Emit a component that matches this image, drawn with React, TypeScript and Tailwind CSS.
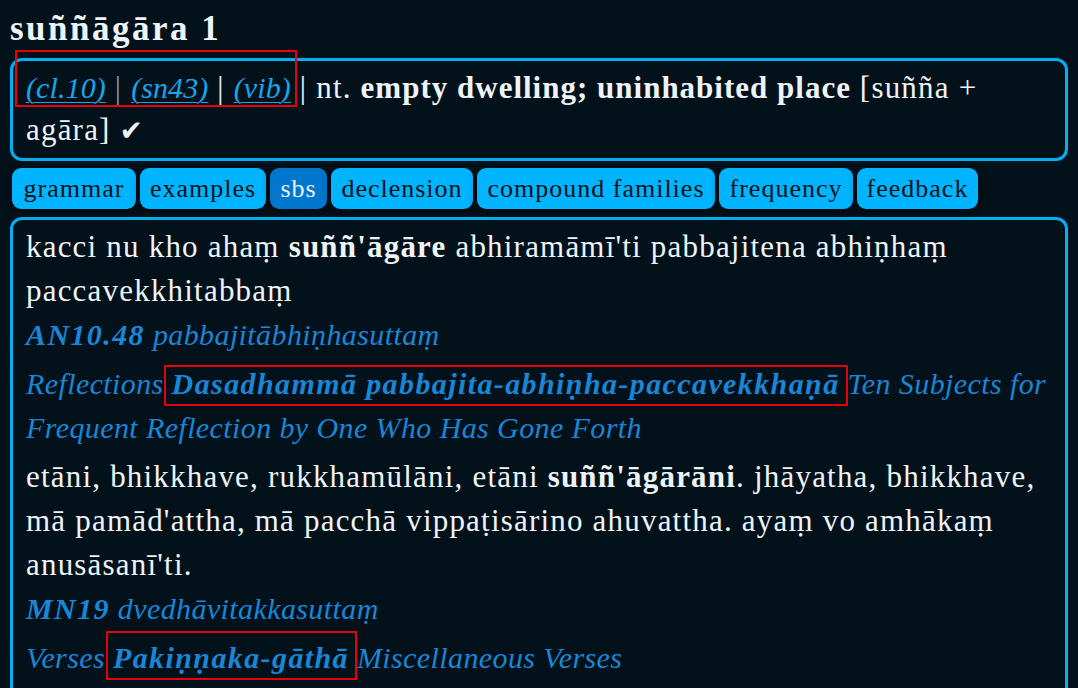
import type { ReactNode } from 'react';

const TABS = [
  { label: 'grammar', active: false, w: 'w-[124px]' },
  { label: 'examples', active: false, w: 'w-[126px]' },
  { label: 'sbs', active: true, w: 'w-[57px]' },
  { label: 'declension', active: false, w: 'w-[142px]' },
  { label: 'compound families', active: false, w: 'w-[238px]' },
  { label: 'frequency', active: false, w: 'w-[134px]' },
  { label: 'feedback', active: false, w: 'w-[121px]' },
] as const;

function RefLink({ children }: { children: ReactNode }) {
  return (
    <span className="text-[30px] italic tracking-[0.1px] text-[#19a6ec] underline decoration-1 underline-offset-[4px]">
      {children}
    </span>
  );
}

function Src({ children }: { children: ReactNode }) {
  return <b className="tracking-[1.4px]">{children}</b>;
}

function Marked({ children, box }: { children: ReactNode; box: string }) {
  return (
    <span className="relative inline-block">
      {children}
      <span className={`pointer-events-none absolute border-2 border-[#e8000b] ${box}`} />
    </span>
  );
}

export default function App() {
  return (
    <div className="min-h-screen bg-[#02111a] px-[10px] pt-[9px] font-['Liberation_Serif',serif] tracking-[1.2px] text-[#eef3f7]">
      <h1 className="text-[35px] font-bold leading-[40px] tracking-[2.5px]">suññāgāra 1</h1>

      <div className="mt-[9px] rounded-[12px] border-[3px] border-[#00b0f0] px-[13px] py-[6px] text-[31px] leading-[42px]">
        <div className="whitespace-nowrap">
          <Marked box="left-[-11px] right-[-6px] top-[-17px] bottom-[2px]">
            <RefLink>(cl.10)</RefLink> <span className="text-[#8a949b]">|</span>{' '}
            <RefLink>(sn43)</RefLink> | <RefLink>(vib)</RefLink>
          </Marked>{' '}
          | nt. <b className="tracking-[1px]">empty dwelling; uninhabited place</b> [suñña +
        </div>
        <div className="whitespace-nowrap">
          agāra] <span className="font-['DejaVu_Sans',sans-serif] text-[28px]">✔</span>
        </div>
      </div>

      <div className="mt-[7px] flex gap-[4px] pl-[2px]">
        {TABS.map((t) => (
          <div
            key={t.label}
            className={`h-[41px] ${t.w} rounded-[9px] text-center text-[26px] leading-[41px] tracking-[1px] shadow-[0_2px_8px_rgba(0,0,0,0.5)] ${
              t.active ? 'bg-[#0077cc] text-[#e6f2fa]' : 'bg-[#00b4ff] text-[#02111a]'
            }`}
          >
            {t.label}
          </div>
        ))}
      </div>

      <div className="mt-[8px] rounded-t-[12px] border-[3px] border-b-0 border-[#00b0f0] px-[13px] pt-[5px] pb-[20px] text-[31px] leading-[44px]">
        <div className="whitespace-nowrap">
          kacci nu kho ahaṃ <b>suññ'āgāre</b> abhiramāmī'ti pabbajitena abhiṇhaṃ
          <br />
          paccavekkhitabbaṃ
        </div>
        <div className="whitespace-nowrap text-[30px] italic tracking-[0.4px] text-[#1a86d6]">
          <Src>AN10.48</Src> pabbajitābhiṇhasuttaṃ
        </div>
        <div className="mt-[5px] whitespace-nowrap text-[30px] italic tracking-[0.4px] text-[#1a86d6]">
          Reflections{' '}
          <Marked box="left-[-8px] right-[-8px] top-[3px] bottom-0">
            <Src>Dasadhammā pabbajita-abhiṇha-paccavekkhaṇā</Src>
          </Marked>{' '}
          Ten Subjects for
          <br />
          Frequent Reflection by One Who Has Gone Forth
        </div>
        <div className="mt-[5px] whitespace-nowrap">
          etāni, bhikkhave, rukkhamūlāni, etāni <b>suññ'āgārāni</b>. jhāyatha, bhikkhave,
          <br />
          mā pamād'attha, mā pacchā vippaṭisārino ahuvattha. ayaṃ vo amhākaṃ
          <br />
          anusāsanī'ti.
        </div>
        <div className="whitespace-nowrap text-[30px] italic tracking-[0.4px] text-[#1a86d6]">
          <Src>MN19</Src> dvedhāvitakkasuttaṃ
        </div>
        <div className="mt-[5px] whitespace-nowrap text-[30px] italic tracking-[0.4px] text-[#1a86d6]">
          Verses{' '}
          <Marked box="left-[-7px] right-[-8px] top-[-5px] bottom-0">
            <Src>Pakiṇṇaka-gāthā</Src>
          </Marked>{' '}
          Miscellaneous Verses
        </div>
      </div>
    </div>
  );
}
